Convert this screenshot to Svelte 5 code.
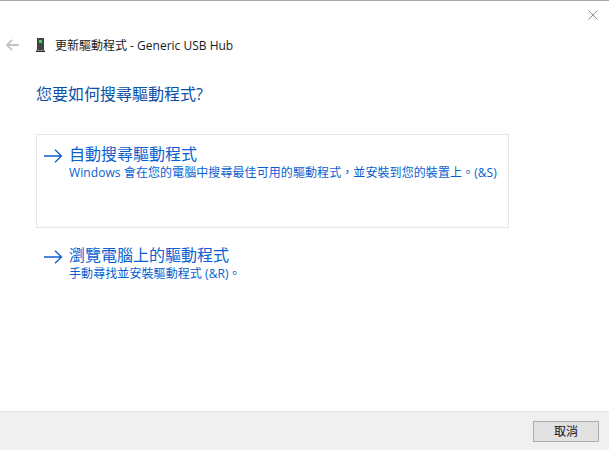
<script>
  const options = [
    { id: 'auto', title: '自動搜尋驅動程式', desc: 'Windows 會在您的電腦中搜尋最佳可用的驅動程式\uFF0C並安裝到您的裝置上。(&S)', boxed: true },
    { id: 'browse', title: '瀏覽電腦上的驅動程式', desc: '手動尋找並安裝驅動程式 (&R)。', boxed: false }
  ];
</script>

<div class="dialog">
  <div class="topline"></div>
  <div class="closebar">
    <svg class="close" width="10" height="10" viewBox="0 0 10 10"><path d="M0.5 0.5L9.5 9.5M9.5 0.5L0.5 9.5" stroke="#8f8f8f" stroke-width="1" fill="none"/></svg>
  </div>
  <div class="header">
    <svg class="back" width="13" height="12" viewBox="0 0 13 12"><path d="M6 0.8L1 6L6 11.2M1 6H13" stroke="#c4c4c4" stroke-width="1.8" fill="none"/></svg>
    <svg class="device" width="9" height="14" viewBox="0 0 9 14">
      <rect x="1" y="0" width="7" height="12" fill="#3f4447"/>
      <rect x="3" y="2" width="3" height="3" fill="#33e03a"/>
      <rect x="0" y="12.5" width="9" height="1.5" fill="#222"/>
    </svg>
    <span class="htext">更新驅動程式 - Generic USB Hub</span>
  </div>
  <main class="content">
    <h1>您要如何搜尋驅動程式?</h1>
    {#each options as o (o.id)}
      <div class="option" class:boxed={o.boxed}>
        <svg class="arrow" width="19" height="14" viewBox="0 0 19 14"><path d="M0 7H17.5M11 0.7L17.5 7L11 13.3" stroke="#0a5fd0" stroke-width="1.3" fill="none"/></svg>
        <div class="otext">
          <div class="otitle">{o.title}</div>
          <div class="odesc">{o.desc}</div>
        </div>
      </div>
    {/each}
  </main>
  <footer class="footer">
    <button class="cancel">取消</button>
  </footer>
</div>

<style>
  :global(body) { margin: 0; background: #fff; }
  .dialog {
    width: 609px; height: 450px; display: flex; flex-direction: column; overflow: hidden;
    font-family: "Open Sans", "Noto Sans CJK TC", sans-serif; background: #fff; box-sizing: border-box;
  }
  .topline { height: 1px; background: #a9a9a9; flex: none; }
  .closebar { height: 29px; flex: none; display: flex; justify-content: flex-end; align-items: flex-start; padding: 9px 11px 0 0; box-sizing: border-box; }
  .header { height: 30px; flex: none; display: flex; align-items: center; padding-left: 6px; }
  .back { margin-right: 17px; }
  .device { margin-right: 10px; }
  .htext { font-size: 12px; color: #1a1a1a; white-space: nowrap; }
  .content { flex: 1; padding: 0 0 0 36px; display: flex; flex-direction: column; }
  h1 { margin: 22px 0 0 0; font-size: 16px; line-height: 24px; font-weight: 400; color: #0a4fa8; height: 27px; }
  .option { width: 473px; box-sizing: border-box; display: flex; align-items: flex-start; padding: 9px 0 0 7px; border: 1px solid transparent; }
  .option.boxed { height: 94px; border-color: #e6e6e6; margin-top: 25px; }
  .option:not(.boxed) { height: 60px; margin-top: 7px; }
  .arrow { margin-top: 5px; margin-right: 6px; flex: none; }
  .otitle { font-size: 16px; line-height: 20px; color: #0a5fd0; }
  .odesc { font-size: 12px; line-height: 17px; letter-spacing: 0.08px; color: #0a5fd0; white-space: nowrap; }
  .footer { height: 39px; flex: none; background: #f0f0f0; border-top: 1px solid #e3e3e3; box-sizing: border-box; display: flex; justify-content: flex-end; align-items: flex-start; padding: 9px 10px 0 0; }
  .cancel { width: 66px; height: 21px; box-sizing: border-box; background: #e1e1e1; border: 1px solid #adadad; border-radius: 0; padding: 0; font-family: inherit; font-size: 12px; color: #111; line-height: 18px; }
</style>
